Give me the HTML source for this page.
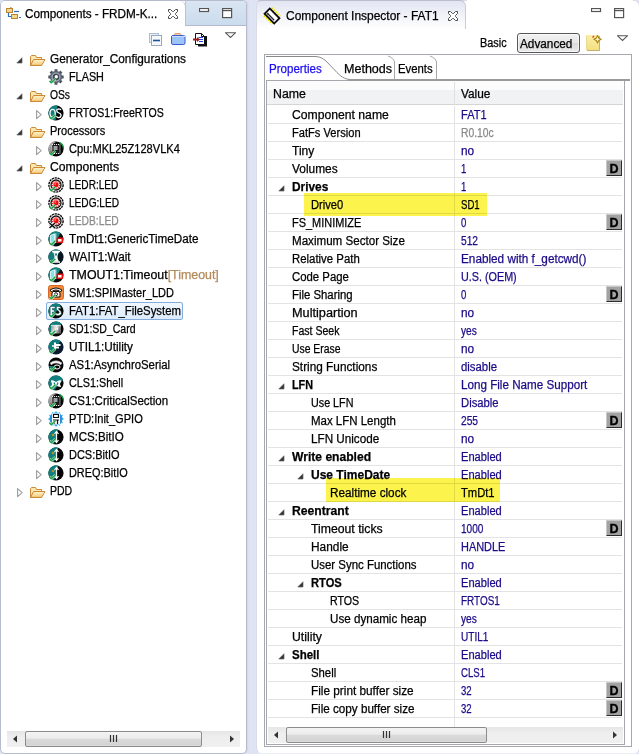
<!DOCTYPE html>
<html><head><meta charset="utf-8"><style>
html,body{margin:0;padding:0;}
body{width:639px;height:754px;overflow:hidden;position:relative;background:#dfe4f4;font-family:"Liberation Sans",sans-serif;font-size:12px;color:#000;}
.ab{position:absolute;display:block;}
.t{position:absolute;transform-origin:0 0;white-space:nowrap;line-height:18px;height:18px;-webkit-text-stroke:0.25px currentColor;}

</style></head><body>

<div class="ab" style="left:0;top:0;width:245px;height:752px;border:1px solid #b6bbce;border-radius:5px;background:#fff;overflow:hidden;box-shadow:1px 0 0 #d5d8e5,2px 0 0 #dcdfec">
<div class="ab" style="left:184px;top:0;width:61px;height:24px;background:linear-gradient(#d9e5f2,#cbdcee);border-bottom:1px solid #b3b8cb;border-left:1px solid #c3c8d8"></div>
<div class="ab" style="left:0;top:0;width:184px;height:25px;background:#fff;border-right:1px solid #bcc1d2;border-top-right-radius:6px"></div>
</div>
<div class="ab" style="left:256px;top:0;width:382px;height:752px;border:1px solid #d9dbe7;border-bottom-color:#eceef5;border-radius:6px;background:#fff;overflow:hidden"></div>
<div class="ab" style="left:467px;top:0;width:166px;height:1px;background:#fff"></div>
<div class="ab" style="left:256px;top:0;width:208px;height:28px;background:linear-gradient(#e2e5f2,#fff);border:1px solid #b9bdcd;border-bottom:none;border-left-color:#d9dbe7;border-right-color:#c8ccda;border-radius:5px 6px 0 0"></div>
<div class="t" id="h1" style="left:25.40px;top:5px;transform:scaleX(0.9778);">Components - FRDM-K...</div>
<svg class="ab" style="left:16px;top:57px" width="7" height="7"><path d="M6 0.8 V6 H0.8 Z" fill="#333" stroke="#666" stroke-width="0.7" stroke-linejoin="round"/></svg>
<svg class="ab" style="left:30px;top:54px" width="16" height="12"><defs><linearGradient id="fg" x1="0" y1="0" x2="0" y2="1"><stop offset="0" stop-color="#fff4cf"/><stop offset="1" stop-color="#f3c977"/></linearGradient></defs><path d="M0.5 2.5 V11.5 H11.5 V3.5 H6.5 L5.5 1.5 H1.5 Z" fill="#fbe6ae" stroke="#c98a3a"/><path d="M0.6 11.4 L3.5 5.5 H15 L11.6 11.4 Z" fill="url(#fg)" stroke="#c98a3a"/></svg>
<div class="t" id="L0" style="left:50.00px;top:50px;transform:scaleX(0.9840);color:#000">Generator_Configurations</div>
<svg class="ab" style="left:48px;top:69px" width="16" height="16"><path d="M13.62 6.58 L15.66 6.51 L15.66 9.49 L13.62 9.42 L12.98 10.97 L14.47 12.36 L12.36 14.47 L10.97 12.98 L9.42 13.62 L9.49 15.66 L6.51 15.66 L6.58 13.62 L5.03 12.98 L3.64 14.47 L1.53 12.36 L3.02 10.97 L2.38 9.42 L0.34 9.49 L0.34 6.51 L2.38 6.58 L3.02 5.03 L1.53 3.64 L3.64 1.53 L5.03 3.02 L6.58 2.38 L6.51 0.34 L9.49 0.34 L9.42 2.38 L10.97 3.02 L12.36 1.53 L14.47 3.64 L12.98 5.03 Z" fill="#4a515c"/><circle cx="8" cy="8" r="6" fill="#5d6672"/><circle cx="8" cy="8" r="4.6" fill="#9aa3b2"/><circle cx="8" cy="8" r="3.2" fill="#3e4654"/><circle cx="8.3" cy="7.7" r="1.7" fill="#fff"/><path d="M1.5 12 L3.3 13.8 L7.3 9.8" fill="none" stroke="#fff" stroke-width="2.6" stroke-linejoin="round" opacity="0.8"/><path d="M1.5 12 L3.3 13.8 L7.3 9.8" fill="none" stroke="#19a040" stroke-width="1.5" stroke-linejoin="round"/></svg>
<div class="t" id="L1" style="left:69.00px;top:68px;transform:scaleX(0.9032);color:#000">FLASH</div>
<svg class="ab" style="left:16px;top:93px" width="7" height="7"><path d="M6 0.8 V6 H0.8 Z" fill="#333" stroke="#666" stroke-width="0.7" stroke-linejoin="round"/></svg>
<svg class="ab" style="left:30px;top:90px" width="16" height="12"><defs><linearGradient id="fg" x1="0" y1="0" x2="0" y2="1"><stop offset="0" stop-color="#fff4cf"/><stop offset="1" stop-color="#f3c977"/></linearGradient></defs><path d="M0.5 2.5 V11.5 H11.5 V3.5 H6.5 L5.5 1.5 H1.5 Z" fill="#fbe6ae" stroke="#c98a3a"/><path d="M0.6 11.4 L3.5 5.5 H15 L11.6 11.4 Z" fill="url(#fg)" stroke="#c98a3a"/></svg>
<div class="t" id="L2" style="left:50.00px;top:86px;transform:scaleX(0.8571);color:#000">OSs</div>
<svg class="ab" style="left:36px;top:110px" width="7" height="10"><path d="M0.6 0.6 L5.2 4.6 L0.6 8.6 Z" fill="#fff" stroke="#9c9c9c" stroke-width="1.1" stroke-linejoin="round"/></svg>
<svg class="ab" style="left:48px;top:105px" width="16" height="16"><circle cx="8" cy="8" r="7.6" fill="#040404"/><path d="M9.47 0.54 L7.50 15.58 A7.6 7.6 0 1 1 9.47 0.54 Z" fill="#11807e"/><ellipse cx="4.6" cy="8.3" rx="2.6" ry="4" fill="none" stroke="#fff" stroke-width="1.3"/><path d="M13 5 Q12.5 3.8 10.8 3.8 Q8.6 3.9 8.8 5.8 Q9 7.4 11 8 Q13.2 8.7 13 10.6 Q12.7 12.6 10.6 12.6 Q9 12.5 8.5 11.2" fill="none" stroke="#fff" stroke-width="1.3"/><path d="M1.5 12 L3.3 13.8 L7.3 9.8" fill="none" stroke="#fff" stroke-width="2.6" stroke-linejoin="round" opacity="0.8"/><path d="M1.5 12 L3.3 13.8 L7.3 9.8" fill="none" stroke="#19a040" stroke-width="1.5" stroke-linejoin="round"/></svg>
<div class="t" id="L3" style="left:69.00px;top:104px;transform:scaleX(0.8785);color:#000">FRTOS1:FreeRTOS</div>
<svg class="ab" style="left:16px;top:129px" width="7" height="7"><path d="M6 0.8 V6 H0.8 Z" fill="#333" stroke="#666" stroke-width="0.7" stroke-linejoin="round"/></svg>
<svg class="ab" style="left:30px;top:126px" width="16" height="12"><defs><linearGradient id="fg" x1="0" y1="0" x2="0" y2="1"><stop offset="0" stop-color="#fff4cf"/><stop offset="1" stop-color="#f3c977"/></linearGradient></defs><path d="M0.5 2.5 V11.5 H11.5 V3.5 H6.5 L5.5 1.5 H1.5 Z" fill="#fbe6ae" stroke="#c98a3a"/><path d="M0.6 11.4 L3.5 5.5 H15 L11.6 11.4 Z" fill="url(#fg)" stroke="#c98a3a"/></svg>
<div class="t" id="L4" style="left:50.00px;top:122px;transform:scaleX(0.9187);color:#000">Processors</div>
<svg class="ab" style="left:36px;top:146px" width="7" height="10"><path d="M0.6 0.6 L5.2 4.6 L0.6 8.6 Z" fill="#fff" stroke="#9c9c9c" stroke-width="1.1" stroke-linejoin="round"/></svg>
<svg class="ab" style="left:48px;top:141px" width="16" height="16"><defs><linearGradient id="cg48141" x1="0" y1="0" x2="1" y2="0.6"><stop offset="0" stop-color="#d8d8d8"/><stop offset="1" stop-color="#505050"/></linearGradient></defs><circle cx="8" cy="8" r="7.6" fill="#050505"/><path d="M9 0.45 A7.6 7.6 0 0 0 1.2 11.5 L5 10 L5 3 Z" fill="url(#cg48141)"/><path d="M11.5 1.3 A7.6 7.6 0 0 1 15.6 8" stroke="#149a3a" stroke-width="1.4" fill="none"/><rect x="4" y="3.5" width="8" height="9" fill="#1a1a1a" stroke="#fff" stroke-width="0.9" stroke-dasharray="1.1 0.9"/><rect x="5.5" y="5" width="4" height="4" fill="#a0a0a0"/><path d="M1.5 12 L3.3 13.8 L7.3 9.8" fill="none" stroke="#fff" stroke-width="2.6" stroke-linejoin="round" opacity="0.8"/><path d="M1.5 12 L3.3 13.8 L7.3 9.8" fill="none" stroke="#19a040" stroke-width="1.5" stroke-linejoin="round"/></svg>
<div class="t" id="L5" style="left:69.00px;top:140px;transform:scaleX(0.9233);color:#000">Cpu:MKL25Z128VLK4</div>
<svg class="ab" style="left:16px;top:165px" width="7" height="7"><path d="M6 0.8 V6 H0.8 Z" fill="#333" stroke="#666" stroke-width="0.7" stroke-linejoin="round"/></svg>
<svg class="ab" style="left:30px;top:162px" width="16" height="12"><defs><linearGradient id="fg" x1="0" y1="0" x2="0" y2="1"><stop offset="0" stop-color="#fff4cf"/><stop offset="1" stop-color="#f3c977"/></linearGradient></defs><path d="M0.5 2.5 V11.5 H11.5 V3.5 H6.5 L5.5 1.5 H1.5 Z" fill="#fbe6ae" stroke="#c98a3a"/><path d="M0.6 11.4 L3.5 5.5 H15 L11.6 11.4 Z" fill="url(#fg)" stroke="#c98a3a"/></svg>
<div class="t" id="L6" style="left:50.00px;top:158px;transform:scaleX(1.0148);color:#000">Components</div>
<svg class="ab" style="left:36px;top:182px" width="7" height="10"><path d="M0.6 0.6 L5.2 4.6 L0.6 8.6 Z" fill="#fff" stroke="#9c9c9c" stroke-width="1.1" stroke-linejoin="round"/></svg>
<svg class="ab" style="left:48px;top:177px" width="16" height="16"><circle cx="8" cy="8" r="7.1" fill="#fff" stroke="#0a0a0a" stroke-width="1.4" stroke-dasharray="2.2 0.7"/><circle cx="8" cy="8" r="5" fill="#fff" stroke="#121212" stroke-width="1.3"/><circle cx="8" cy="8" r="3.6" fill="#fff" stroke="#e81010" stroke-width="1.1" stroke-dasharray="1.1 0.9"/><circle cx="8" cy="7.8" r="2.6" fill="#ee0c0c"/><circle cx="7.3" cy="7" r="0.9" fill="#ff7070"/><path d="M1.5 12 L3.3 13.8 L7.3 9.8" fill="none" stroke="#fff" stroke-width="2.6" stroke-linejoin="round" opacity="0.8"/><path d="M1.5 12 L3.3 13.8 L7.3 9.8" fill="none" stroke="#19a040" stroke-width="1.5" stroke-linejoin="round"/></svg>
<div class="t" id="L7" style="left:69.00px;top:176px;transform:scaleX(0.8414);color:#000">LEDR:LED</div>
<svg class="ab" style="left:36px;top:200px" width="7" height="10"><path d="M0.6 0.6 L5.2 4.6 L0.6 8.6 Z" fill="#fff" stroke="#9c9c9c" stroke-width="1.1" stroke-linejoin="round"/></svg>
<svg class="ab" style="left:48px;top:195px" width="16" height="16"><circle cx="8" cy="8" r="7.1" fill="#fff" stroke="#0a0a0a" stroke-width="1.4" stroke-dasharray="2.2 0.7"/><circle cx="8" cy="8" r="5" fill="#fff" stroke="#121212" stroke-width="1.3"/><circle cx="8" cy="8" r="3.6" fill="#fff" stroke="#e81010" stroke-width="1.1" stroke-dasharray="1.1 0.9"/><circle cx="8" cy="7.8" r="2.6" fill="#ee0c0c"/><circle cx="7.3" cy="7" r="0.9" fill="#ff7070"/><path d="M1.5 12 L3.3 13.8 L7.3 9.8" fill="none" stroke="#fff" stroke-width="2.6" stroke-linejoin="round" opacity="0.8"/><path d="M1.5 12 L3.3 13.8 L7.3 9.8" fill="none" stroke="#19a040" stroke-width="1.5" stroke-linejoin="round"/></svg>
<div class="t" id="L8" style="left:69.00px;top:194px;transform:scaleX(0.8423);color:#000">LEDG:LED</div>
<svg class="ab" style="left:36px;top:218px" width="7" height="10"><path d="M0.6 0.6 L5.2 4.6 L0.6 8.6 Z" fill="#fff" stroke="#9c9c9c" stroke-width="1.1" stroke-linejoin="round"/></svg>
<svg class="ab" style="left:48px;top:213px" width="16" height="16"><circle cx="8" cy="8" r="7.1" fill="#fff" stroke="#0a0a0a" stroke-width="1.4" stroke-dasharray="2.2 0.7"/><circle cx="8" cy="8" r="5" fill="#fff" stroke="#121212" stroke-width="1.3"/><circle cx="8" cy="8" r="3.6" fill="#fff" stroke="#e81010" stroke-width="1.1" stroke-dasharray="1.1 0.9"/><circle cx="8" cy="7.8" r="2.6" fill="#ee0c0c"/><circle cx="7.3" cy="7" r="0.9" fill="#ff7070"/><path d="M1.5 10 L7 15 M7 10 L1.5 15" stroke="#fff" stroke-width="3"/><path d="M1.5 10 L7 15 M7 10 L1.5 15" stroke="#111" stroke-width="1.5"/></svg>
<div class="t" id="L9" style="left:69.00px;top:212px;transform:scaleX(0.8562);color:#8c8c8c">LEDB:LED</div>
<svg class="ab" style="left:36px;top:236px" width="7" height="10"><path d="M0.6 0.6 L5.2 4.6 L0.6 8.6 Z" fill="#fff" stroke="#9c9c9c" stroke-width="1.1" stroke-linejoin="round"/></svg>
<svg class="ab" style="left:48px;top:231px" width="16" height="16"><circle cx="8" cy="8" r="7.6" fill="#0a0a0a"/><path d="M12.51 1.88 L5.51 15.18 A7.6 7.6 0 1 1 12.51 1.88 Z" fill="#138a86"/><path d="M2.5 4.5 L6.5 2.8 V11 L2.5 12.8 Z" fill="#80e4f0" stroke="#fff" stroke-width="0.8"/><path d="M7.8 2.5 V12" stroke="#fff" stroke-width="0.9"/><rect x="9.3" y="7.3" width="5" height="4" fill="#fff" stroke="#e00e0e" stroke-width="1.5"/><path d="M1.5 12 L3.3 13.8 L7.3 9.8" fill="none" stroke="#fff" stroke-width="2.6" stroke-linejoin="round" opacity="0.8"/><path d="M1.5 12 L3.3 13.8 L7.3 9.8" fill="none" stroke="#19a040" stroke-width="1.5" stroke-linejoin="round"/></svg>
<div class="t" id="L10" style="left:69.00px;top:230px;transform:scaleX(0.9745);color:#000">TmDt1:GenericTimeDate</div>
<svg class="ab" style="left:36px;top:254px" width="7" height="10"><path d="M0.6 0.6 L5.2 4.6 L0.6 8.6 Z" fill="#fff" stroke="#9c9c9c" stroke-width="1.1" stroke-linejoin="round"/></svg>
<svg class="ab" style="left:48px;top:249px" width="16" height="16"><circle cx="8" cy="8" r="7.6" fill="#06161e"/><path d="M12.18 1.65 L3.82 14.35 A7.6 7.6 0 0 1 12.18 1.65 Z" fill="#157a7e"/><path d="M4 2.5 H12 M4 13 H12" stroke="#fff" stroke-width="1.4"/><path d="M5 3 Q8 8 5 12.5 H11 Q8 8 11 3 Z" fill="#fff"/><path d="M6.5 4.5 H9.5 L8 7.5 Z" fill="#157a7e"/><path d="M1.5 12 L3.3 13.8 L7.3 9.8" fill="none" stroke="#fff" stroke-width="2.6" stroke-linejoin="round" opacity="0.8"/><path d="M1.5 12 L3.3 13.8 L7.3 9.8" fill="none" stroke="#19a040" stroke-width="1.5" stroke-linejoin="round"/></svg>
<div class="t" id="L11" style="left:69.00px;top:248px;transform:scaleX(0.9752);color:#000">WAIT1:Wait</div>
<svg class="ab" style="left:36px;top:272px" width="7" height="10"><path d="M0.6 0.6 L5.2 4.6 L0.6 8.6 Z" fill="#fff" stroke="#9c9c9c" stroke-width="1.1" stroke-linejoin="round"/></svg>
<svg class="ab" style="left:48px;top:267px" width="16" height="16"><circle cx="8" cy="8" r="7.6" fill="#0a0a0a"/><path d="M12.51 1.88 L5.51 15.18 A7.6 7.6 0 1 1 12.51 1.88 Z" fill="#138a86"/><path d="M2.5 4.5 L6.5 2.8 V11 L2.5 12.8 Z" fill="#80e4f0" stroke="#fff" stroke-width="0.8"/><path d="M7.8 2.5 V12" stroke="#fff" stroke-width="0.9"/><rect x="9.3" y="7.3" width="5" height="4" fill="#fff" stroke="#e00e0e" stroke-width="1.5"/><path d="M1.5 12 L3.3 13.8 L7.3 9.8" fill="none" stroke="#fff" stroke-width="2.6" stroke-linejoin="round" opacity="0.8"/><path d="M1.5 12 L3.3 13.8 L7.3 9.8" fill="none" stroke="#19a040" stroke-width="1.5" stroke-linejoin="round"/></svg>
<div class="t" id="L12" style="left:69.00px;top:266px;transform:scaleX(1.0320);color:#000">TMOUT1:Timeout<span style="color:#b48a5a">[Timeout]</span></div>
<svg class="ab" style="left:36px;top:290px" width="7" height="10"><path d="M0.6 0.6 L5.2 4.6 L0.6 8.6 Z" fill="#fff" stroke="#9c9c9c" stroke-width="1.1" stroke-linejoin="round"/></svg>
<svg class="ab" style="left:48px;top:285px" width="16" height="16"><rect x="0.5" y="0.5" width="15" height="14" rx="2" fill="#f48a3c" stroke="#d8662a"/><path d="M2 5 Q8 1 14 5 L12.5 7 L11 5.5 Q8 4.5 5 5.5 L3.5 7 Z" fill="#fff" stroke="#111" stroke-width="1"/><path d="M4 8 L5 6.5 H11 L12 8 V12 H4 Z" fill="#fff" stroke="#111" stroke-width="1"/><circle cx="8" cy="9.2" r="1.5" fill="none" stroke="#111" stroke-width="0.9"/><path d="M1.5 12 L3.3 13.8 L7.3 9.8" fill="none" stroke="#fff" stroke-width="2.6" stroke-linejoin="round" opacity="0.8"/><path d="M1.5 12 L3.3 13.8 L7.3 9.8" fill="none" stroke="#19a040" stroke-width="1.5" stroke-linejoin="round"/></svg>
<div class="t" id="L13" style="left:69.00px;top:284px;transform:scaleX(0.9142);color:#000">SM1:SPIMaster_LDD</div>
<svg class="ab" style="left:36px;top:308px" width="7" height="10"><path d="M0.6 0.6 L5.2 4.6 L0.6 8.6 Z" fill="#fff" stroke="#9c9c9c" stroke-width="1.1" stroke-linejoin="round"/></svg>
<div class="ab" style="left:46px;top:302px;width:135px;height:16px;border:1px solid #84acdd;border-radius:2px;background:linear-gradient(#f1f7fe,#dcebfc)"></div>
<svg class="ab" style="left:48px;top:303px" width="16" height="16"><circle cx="8" cy="8" r="7.6" fill="#050505"/><path d="M12.71 2.03 L4.46 14.73 A7.6 7.6 0 1 1 12.71 2.03 Z" fill="#0f7f7d"/><path d="M2.2 3.5 H7 V5.5 H4.4 V7 H6.5 V9 H4.4 V12.5 H2.2 Z" fill="#fff" stroke="#0a4a4a" stroke-width="0.5"/><path d="M12.8 4 Q11 3 9.3 3.6 Q7.6 4.5 8.6 6.6 Q9.5 7.7 11 8.6 Q11.8 9.4 10.8 10.2 Q9.6 10.7 8 10 L7.6 12 Q10 13.4 12.4 12 Q14 10.6 13 8.4 Q12 7.2 10.6 6.3 Q10 5.7 10.8 5.3 Q11.8 5 12.6 5.8 Z" fill="#fff" stroke="#0a4a4a" stroke-width="0.5"/><path d="M1.5 12 L3.3 13.8 L7.3 9.8" fill="none" stroke="#fff" stroke-width="2.6" stroke-linejoin="round" opacity="0.8"/><path d="M1.5 12 L3.3 13.8 L7.3 9.8" fill="none" stroke="#19a040" stroke-width="1.5" stroke-linejoin="round"/></svg>
<div class="t" id="L14" style="left:69.00px;top:302px;transform:scaleX(0.9471);color:#000">FAT1:FAT_FileSystem</div>
<svg class="ab" style="left:36px;top:326px" width="7" height="10"><path d="M0.6 0.6 L5.2 4.6 L0.6 8.6 Z" fill="#fff" stroke="#9c9c9c" stroke-width="1.1" stroke-linejoin="round"/></svg>
<svg class="ab" style="left:48px;top:321px" width="16" height="16"><circle cx="8" cy="8" r="7.6" fill="#050505"/><path d="M13.37 2.63 L2.63 13.37 A7.6 7.6 0 0 1 13.37 2.63 Z" fill="#0f7f7d"/><defs><linearGradient id="sdg" x1="0" y1="0" x2="1" y2="0.3"><stop offset="0" stop-color="#888"/><stop offset="0.55" stop-color="#eee"/><stop offset="1" stop-color="#666"/></linearGradient></defs><rect x="3" y="4" width="10" height="8.5" fill="url(#sdg)"/><path d="M3.5 4.5 H12.5" stroke="#fff" stroke-width="1.4" stroke-dasharray="1 1"/><path d="M8 8 L10 6 V9 Z" fill="#fff"/><path d="M1.5 12 L3.3 13.8 L7.3 9.8" fill="none" stroke="#fff" stroke-width="2.6" stroke-linejoin="round" opacity="0.8"/><path d="M1.5 12 L3.3 13.8 L7.3 9.8" fill="none" stroke="#19a040" stroke-width="1.5" stroke-linejoin="round"/></svg>
<div class="t" id="L15" style="left:69.00px;top:320px;transform:scaleX(0.8749);color:#000">SD1:SD_Card</div>
<svg class="ab" style="left:36px;top:344px" width="7" height="10"><path d="M0.6 0.6 L5.2 4.6 L0.6 8.6 Z" fill="#fff" stroke="#9c9c9c" stroke-width="1.1" stroke-linejoin="round"/></svg>
<svg class="ab" style="left:48px;top:339px" width="16" height="16"><circle cx="8" cy="8" r="7.6" fill="#0a1a30"/><path d="M12.71 2.03 L3.82 14.35 A7.6 7.6 0 1 1 12.71 2.03 Z" fill="#0f7f7d"/><path d="M7 3.5 V11 M7 6 H12.5 M7 8.5 H11" stroke="#fff" stroke-width="2"/><path d="M4 7 L7 7" stroke="#fff" stroke-width="1.5"/><path d="M1.5 12 L3.3 13.8 L7.3 9.8" fill="none" stroke="#fff" stroke-width="2.6" stroke-linejoin="round" opacity="0.8"/><path d="M1.5 12 L3.3 13.8 L7.3 9.8" fill="none" stroke="#19a040" stroke-width="1.5" stroke-linejoin="round"/></svg>
<div class="t" id="L16" style="left:69.00px;top:338px;transform:scaleX(0.9786);color:#000">UTIL1:Utility</div>
<svg class="ab" style="left:36px;top:362px" width="7" height="10"><path d="M0.6 0.6 L5.2 4.6 L0.6 8.6 Z" fill="#fff" stroke="#9c9c9c" stroke-width="1.1" stroke-linejoin="round"/></svg>
<svg class="ab" style="left:48px;top:357px" width="16" height="16"><circle cx="8" cy="8" r="7.5" fill="#060606"/><path d="M1 9 A7.5 7.5 0 0 0 4 14 L5 9 Z" fill="#0f7f7d"/><path d="M2 6 Q8 1.5 14 6 L12.5 8 L11 6.5 Q8 5.5 5 6.5 L3.5 8 Z" fill="#fff" stroke="#aaa" stroke-width="0.6"/><ellipse cx="9" cy="10" rx="3" ry="2" fill="none" stroke="#fff" stroke-width="1"/><path d="M1.5 12 L3.3 13.8 L7.3 9.8" fill="none" stroke="#fff" stroke-width="2.6" stroke-linejoin="round" opacity="0.8"/><path d="M1.5 12 L3.3 13.8 L7.3 9.8" fill="none" stroke="#19a040" stroke-width="1.5" stroke-linejoin="round"/></svg>
<div class="t" id="L17" style="left:69.00px;top:356px;transform:scaleX(0.9472);color:#000">AS1:AsynchroSerial</div>
<svg class="ab" style="left:36px;top:380px" width="7" height="10"><path d="M0.6 0.6 L5.2 4.6 L0.6 8.6 Z" fill="#fff" stroke="#9c9c9c" stroke-width="1.1" stroke-linejoin="round"/></svg>
<svg class="ab" style="left:48px;top:375px" width="16" height="16"><circle cx="8" cy="8" r="7.6" fill="#050505"/><path d="M14.99 5.01 L6.04 15.34 A7.6 7.6 0 1 1 14.99 5.01 Z" fill="#11807e"/><path d="M2.8 5.5 Q5 4.5 8 7 Q11 4.5 13.2 5.5 L12 9 L13 12 Q10.5 12.5 8 10 Q5.5 12.5 3 12 L4 9 Z" fill="#fff"/><path d="M6 7.5 L7 10 M10 7.5 L9 10" stroke="#11807e" stroke-width="1.3"/><path d="M1.5 12 L3.3 13.8 L7.3 9.8" fill="none" stroke="#fff" stroke-width="2.6" stroke-linejoin="round" opacity="0.8"/><path d="M1.5 12 L3.3 13.8 L7.3 9.8" fill="none" stroke="#19a040" stroke-width="1.5" stroke-linejoin="round"/></svg>
<div class="t" id="L18" style="left:69.00px;top:374px;transform:scaleX(0.9002);color:#000">CLS1:Shell</div>
<svg class="ab" style="left:36px;top:398px" width="7" height="10"><path d="M0.6 0.6 L5.2 4.6 L0.6 8.6 Z" fill="#fff" stroke="#9c9c9c" stroke-width="1.1" stroke-linejoin="round"/></svg>
<svg class="ab" style="left:48px;top:393px" width="16" height="16"><defs><linearGradient id="cg48393" x1="0" y1="0" x2="1" y2="0.6"><stop offset="0" stop-color="#d8d8d8"/><stop offset="1" stop-color="#505050"/></linearGradient></defs><circle cx="8" cy="8" r="7.6" fill="#050505"/><path d="M9 0.45 A7.6 7.6 0 0 0 1.2 11.5 L5 10 L5 3 Z" fill="url(#cg48393)"/><path d="M11.5 1.3 A7.6 7.6 0 0 1 15.6 8" stroke="#149a3a" stroke-width="1.4" fill="none"/><rect x="4" y="3.5" width="8" height="9" fill="#1a1a1a" stroke="#fff" stroke-width="0.9" stroke-dasharray="1.1 0.9"/><rect x="5.5" y="5" width="4" height="4" fill="#a0a0a0"/><path d="M1.5 12 L3.3 13.8 L7.3 9.8" fill="none" stroke="#fff" stroke-width="2.6" stroke-linejoin="round" opacity="0.8"/><path d="M1.5 12 L3.3 13.8 L7.3 9.8" fill="none" stroke="#19a040" stroke-width="1.5" stroke-linejoin="round"/></svg>
<div class="t" id="L19" style="left:69.00px;top:392px;transform:scaleX(0.9593);color:#000">CS1:CriticalSection</div>
<svg class="ab" style="left:36px;top:416px" width="7" height="10"><path d="M0.6 0.6 L5.2 4.6 L0.6 8.6 Z" fill="#fff" stroke="#9c9c9c" stroke-width="1.1" stroke-linejoin="round"/></svg>
<svg class="ab" style="left:48px;top:411px" width="16" height="16"><path d="M14.36 7.25 L15.57 7.30 L15.57 8.70 L14.36 8.75 L13.88 10.53 L14.90 11.18 L14.21 12.39 L13.13 11.83 L11.83 13.13 L12.39 14.21 L11.18 14.90 L10.53 13.88 L8.75 14.36 L8.70 15.57 L7.30 15.57 L7.25 14.36 L5.47 13.88 L4.82 14.90 L3.61 14.21 L4.17 13.13 L2.87 11.83 L1.79 12.39 L1.10 11.18 L2.12 10.53 L1.64 8.75 L0.43 8.70 L0.43 7.30 L1.64 7.25 L2.12 5.47 L1.10 4.82 L1.79 3.61 L2.87 4.17 L4.17 2.87 L3.61 1.79 L4.82 1.10 L5.47 2.12 L7.25 1.64 L7.30 0.43 L8.70 0.43 L8.75 1.64 L10.53 2.12 L11.18 1.10 L12.39 1.79 L11.83 2.87 L13.13 4.17 L14.21 3.61 L14.90 4.82 L13.88 5.47 Z" fill="#3bb0f0"/><circle cx="8" cy="8" r="6.4" fill="#2a8ee0"/><rect x="4" y="2.5" width="8" height="11" fill="#fff"/><path d="M5.5 3.5 V6.5 H10.5 V3.5 Z M6.5 9 V13 M9.5 9 V13 M5 9 H11" fill="none" stroke="#111" stroke-width="1.2"/><path d="M1.5 12 L3.3 13.8 L7.3 9.8" fill="none" stroke="#fff" stroke-width="2.6" stroke-linejoin="round" opacity="0.8"/><path d="M1.5 12 L3.3 13.8 L7.3 9.8" fill="none" stroke="#19a040" stroke-width="1.5" stroke-linejoin="round"/></svg>
<div class="t" id="L20" style="left:69.00px;top:410px;transform:scaleX(0.9216);color:#000">PTD:Init_GPIO</div>
<svg class="ab" style="left:36px;top:434px" width="7" height="10"><path d="M0.6 0.6 L5.2 4.6 L0.6 8.6 Z" fill="#fff" stroke="#9c9c9c" stroke-width="1.1" stroke-linejoin="round"/></svg>
<svg class="ab" style="left:48px;top:429px" width="16" height="16"><circle cx="8" cy="8" r="7.6" fill="#050505"/><path d="M10.37 0.78 L6.07 15.35 A7.6 7.6 0 1 1 10.37 0.78 Z" fill="#0f7f7d"/><circle cx="5" cy="6" r="1.3" fill="#b89028"/><path d="M8.5 3 V13" stroke="#fff" stroke-width="1.3"/><path d="M6.5 5 L8.5 2.5 L10.5 5 M6.5 11 L8.5 13.5 L10.5 11" fill="none" stroke="#fff" stroke-width="1.2"/><path d="M1.5 12 L3.3 13.8 L7.3 9.8" fill="none" stroke="#fff" stroke-width="2.6" stroke-linejoin="round" opacity="0.8"/><path d="M1.5 12 L3.3 13.8 L7.3 9.8" fill="none" stroke="#19a040" stroke-width="1.5" stroke-linejoin="round"/></svg>
<div class="t" id="L21" style="left:69.00px;top:428px;transform:scaleX(0.9640);color:#000">MCS:BitIO</div>
<svg class="ab" style="left:36px;top:452px" width="7" height="10"><path d="M0.6 0.6 L5.2 4.6 L0.6 8.6 Z" fill="#fff" stroke="#9c9c9c" stroke-width="1.1" stroke-linejoin="round"/></svg>
<svg class="ab" style="left:48px;top:447px" width="16" height="16"><circle cx="8" cy="8" r="7.6" fill="#050505"/><path d="M10.37 0.78 L6.07 15.35 A7.6 7.6 0 1 1 10.37 0.78 Z" fill="#0f7f7d"/><circle cx="5" cy="6" r="1.3" fill="#b89028"/><path d="M8.5 3 V13" stroke="#fff" stroke-width="1.3"/><path d="M6.5 5 L8.5 2.5 L10.5 5 M6.5 11 L8.5 13.5 L10.5 11" fill="none" stroke="#fff" stroke-width="1.2"/><path d="M1.5 12 L3.3 13.8 L7.3 9.8" fill="none" stroke="#fff" stroke-width="2.6" stroke-linejoin="round" opacity="0.8"/><path d="M1.5 12 L3.3 13.8 L7.3 9.8" fill="none" stroke="#19a040" stroke-width="1.5" stroke-linejoin="round"/></svg>
<div class="t" id="L22" style="left:69.00px;top:446px;transform:scaleX(0.9150);color:#000">DCS:BitIO</div>
<svg class="ab" style="left:36px;top:470px" width="7" height="10"><path d="M0.6 0.6 L5.2 4.6 L0.6 8.6 Z" fill="#fff" stroke="#9c9c9c" stroke-width="1.1" stroke-linejoin="round"/></svg>
<svg class="ab" style="left:48px;top:465px" width="16" height="16"><circle cx="8" cy="8" r="7.6" fill="#050505"/><path d="M10.37 0.78 L6.07 15.35 A7.6 7.6 0 1 1 10.37 0.78 Z" fill="#0f7f7d"/><circle cx="5" cy="6" r="1.3" fill="#b89028"/><path d="M8.5 3 V13" stroke="#fff" stroke-width="1.3"/><path d="M6.5 5 L8.5 2.5 L10.5 5 M6.5 11 L8.5 13.5 L10.5 11" fill="none" stroke="#fff" stroke-width="1.2"/><path d="M1.5 12 L3.3 13.8 L7.3 9.8" fill="none" stroke="#fff" stroke-width="2.6" stroke-linejoin="round" opacity="0.8"/><path d="M1.5 12 L3.3 13.8 L7.3 9.8" fill="none" stroke="#19a040" stroke-width="1.5" stroke-linejoin="round"/></svg>
<div class="t" id="L23" style="left:69.00px;top:464px;transform:scaleX(0.9085);color:#000">DREQ:BitIO</div>
<svg class="ab" style="left:17px;top:488px" width="7" height="10"><path d="M0.6 0.6 L5.2 4.6 L0.6 8.6 Z" fill="#fff" stroke="#9c9c9c" stroke-width="1.1" stroke-linejoin="round"/></svg>
<svg class="ab" style="left:30px;top:486px" width="16" height="12"><defs><linearGradient id="fg" x1="0" y1="0" x2="0" y2="1"><stop offset="0" stop-color="#fff4cf"/><stop offset="1" stop-color="#f3c977"/></linearGradient></defs><path d="M0.5 2.5 V11.5 H11.5 V3.5 H6.5 L5.5 1.5 H1.5 Z" fill="#fbe6ae" stroke="#c98a3a"/><path d="M0.6 11.4 L3.5 5.5 H15 L11.6 11.4 Z" fill="url(#fg)" stroke="#c98a3a"/></svg>
<div class="t" id="L24" style="left:50.00px;top:482px;transform:scaleX(0.8752);color:#000">PDD</div>
<div class="t" id="h2" style="left:286.20px;top:7px;transform:scaleX(0.9961);">Component Inspector - FAT1</div>
<div class="t" id="basic" style="left:480.28px;top:34px;transform:scaleX(0.9074);">Basic</div>
<div class="ab" style="left:517px;top:33px;width:61px;height:18px;border:1px solid #585858;border-radius:3px;background:linear-gradient(#f2f2f2,#e6e6e6 50%,#d9d9d9 51%,#ebebeb);box-shadow:inset 0 0 0 1px rgba(255,255,255,0.6)"></div>
<div class="t" id="adv" style="left:520.40px;top:35px;transform:scaleX(0.9811);">Advanced</div>
<div class="ab" style="left:264px;top:54px;width:366px;height:691px;border:1px solid #a6a8ae;background:#fff"></div>
<div class="ab" style="left:348px;top:79px;width:282px;height:2px;background:#9a9a9a"></div>
<svg class="ab" style="left:264px;top:54px" width="368" height="28"><path d="M2 2.5 H51 C56 2.5 59 4.5 62 7 L73 18.5 C76 21.5 80 25.5 87 25.5" fill="#fff" stroke="#8a8a8a" stroke-width="1"/><path d="M124 2 C127 3 130 5 130.5 8 V26" fill="none" stroke="#a8a8a8"/><path d="M166 2 C169 3 172 5 172.5 8 V26" fill="none" stroke="#a8a8a8"/></svg>
<div class="t" id="props" style="left:269.24px;top:60px;transform:scaleX(0.9630);color:#1f10f0">Properties</div>
<div class="t" id="methods" style="left:343.77px;top:60px;transform:scaleX(1.0447);">Methods</div>
<div class="t" id="events" style="left:398.03px;top:60px;transform:scaleX(0.9451);">Events</div>
<div class="ab" style="left:266px;top:80px;width:357px;height:663px;border:1px solid #a6a8ae;background:#fff"></div>
<div class="ab" style="left:348px;top:79px;width:282px;height:2px;background:#9a9a9a"></div>
<div class="ab" style="left:267px;top:81px;width:356px;height:23px;background:linear-gradient(#fcfcfc 0,#fcfcfc 9px,#f1f2f4 9px,#f1f2f4 100%);border-bottom:1px solid #d5d5d5"></div>
<div class="ab" style="left:454px;top:82px;width:1px;height:22px;background:#e0e0e0"></div>
<div class="t" id="name" style="left:273.37px;top:85px;transform:scaleX(1.0264);">Name</div>
<div class="t" id="value" style="left:460.60px;top:85px;transform:scaleX(0.9869);">Value</div>
<div class="ab" style="left:268px;top:123px;width:354px;height:1px;background:#e3e3e3"></div>
<div class="ab" style="left:454px;top:106px;width:1px;height:17px;background:#e3e3e3"></div>
<div class="t" id="N0" style="left:292.00px;top:106px;transform:scaleX(1.0148);">Component name</div>
<div class="t" id="V0" style="left:460.50px;top:106px;transform:scaleX(0.9188);color:#1c0c88">FAT1</div>
<div class="ab" style="left:268px;top:141px;width:354px;height:1px;background:#e3e3e3"></div>
<div class="ab" style="left:454px;top:124px;width:1px;height:17px;background:#e3e3e3"></div>
<div class="t" id="N1" style="left:292.00px;top:124px;transform:scaleX(0.9261);">FatFs Version</div>
<div class="t" id="V1" style="left:460.50px;top:124px;transform:scaleX(0.8598);color:#8a8a8a">R0.10c</div>
<div class="ab" style="left:268px;top:159px;width:354px;height:1px;background:#e3e3e3"></div>
<div class="ab" style="left:454px;top:142px;width:1px;height:17px;background:#e3e3e3"></div>
<div class="t" id="N2" style="left:292.00px;top:142px;transform:scaleX(1.0004);">Tiny</div>
<div class="t" id="V2" style="left:460.50px;top:142px;transform:scaleX(0.9862);color:#1c0c88">no</div>
<div class="ab" style="left:268px;top:177px;width:354px;height:1px;background:#e3e3e3"></div>
<div class="ab" style="left:454px;top:160px;width:1px;height:17px;background:#e3e3e3"></div>
<div class="t" id="N3" style="left:292.00px;top:160px;transform:scaleX(0.9915);">Volumes</div>
<div class="t" id="V3" style="left:460.50px;top:160px;transform:scaleX(0.8000);color:#1c0c88">1</div>
<div class="ab" style="left:606px;top:160px;width:14px;height:14px;background:#a2a2a2;border-top:1px solid #c8c8c8;border-left:1px solid #c8c8c8;border-right:1px solid #2c2c2c;border-bottom:1px solid #2c2c2c;font-weight:bold;font-size:12.5px;line-height:16px;text-align:center;-webkit-text-stroke:0.3px #000">D</div>
<div class="ab" style="left:268px;top:195px;width:354px;height:1px;background:#e3e3e3"></div>
<div class="ab" style="left:454px;top:178px;width:1px;height:17px;background:#e3e3e3"></div>
<svg class="ab" style="left:278px;top:185px" width="7" height="7"><path d="M6 0.8 V6 H0.8 Z" fill="#333" stroke="#666" stroke-width="0.7" stroke-linejoin="round"/></svg>
<div class="t" id="N4" style="left:292.00px;top:178px;transform:scaleX(0.9898);font-weight:bold;">Drives</div>
<div class="t" id="V4" style="left:460.50px;top:178px;transform:scaleX(0.8000);color:#1c0c88">1</div>
<div class="ab" style="left:268px;top:213px;width:354px;height:1px;background:#e3e3e3"></div>
<div class="ab" style="left:454px;top:196px;width:1px;height:17px;background:#e3e3e3"></div>
<div class="t" id="N5" style="left:311.00px;top:196px;transform:scaleX(0.9295);">Drive0</div>
<div class="t" id="V5" style="left:460.50px;top:196px;transform:scaleX(0.8000);color:#000">SD1</div>
<div class="ab" style="left:268px;top:231px;width:354px;height:1px;background:#e3e3e3"></div>
<div class="ab" style="left:454px;top:214px;width:1px;height:17px;background:#e3e3e3"></div>
<div class="t" id="N6" style="left:292.00px;top:214px;transform:scaleX(0.9121);">FS_MINIMIZE</div>
<div class="t" id="V6" style="left:460.50px;top:214px;transform:scaleX(0.8000);color:#1c0c88">0</div>
<div class="ab" style="left:606px;top:214px;width:14px;height:14px;background:#a2a2a2;border-top:1px solid #c8c8c8;border-left:1px solid #c8c8c8;border-right:1px solid #2c2c2c;border-bottom:1px solid #2c2c2c;font-weight:bold;font-size:12.5px;line-height:16px;text-align:center;-webkit-text-stroke:0.3px #000">D</div>
<div class="ab" style="left:268px;top:249px;width:354px;height:1px;background:#e3e3e3"></div>
<div class="ab" style="left:454px;top:232px;width:1px;height:17px;background:#e3e3e3"></div>
<div class="t" id="N7" style="left:292.00px;top:232px;transform:scaleX(0.9671);">Maximum Sector Size</div>
<div class="t" id="V7" style="left:460.50px;top:232px;transform:scaleX(0.8508);color:#1c0c88">512</div>
<div class="ab" style="left:268px;top:267px;width:354px;height:1px;background:#e3e3e3"></div>
<div class="ab" style="left:454px;top:250px;width:1px;height:17px;background:#e3e3e3"></div>
<div class="t" id="N8" style="left:292.00px;top:250px;transform:scaleX(0.9487);">Relative Path</div>
<div class="t" id="V8" style="left:460.50px;top:250px;transform:scaleX(0.9794);color:#1c0c88">Enabled with f_getcwd()</div>
<div class="ab" style="left:268px;top:285px;width:354px;height:1px;background:#e3e3e3"></div>
<div class="ab" style="left:454px;top:268px;width:1px;height:17px;background:#e3e3e3"></div>
<div class="t" id="N9" style="left:292.00px;top:268px;transform:scaleX(0.9469);">Code Page</div>
<div class="t" id="V9" style="left:460.50px;top:268px;transform:scaleX(0.8986);color:#1c0c88">U.S. (OEM)</div>
<div class="ab" style="left:268px;top:303px;width:354px;height:1px;background:#e3e3e3"></div>
<div class="ab" style="left:454px;top:286px;width:1px;height:17px;background:#e3e3e3"></div>
<div class="t" id="N10" style="left:292.00px;top:286px;transform:scaleX(0.9461);">File Sharing</div>
<div class="t" id="V10" style="left:460.50px;top:286px;transform:scaleX(0.8000);color:#1c0c88">0</div>
<div class="ab" style="left:606px;top:286px;width:14px;height:14px;background:#a2a2a2;border-top:1px solid #c8c8c8;border-left:1px solid #c8c8c8;border-right:1px solid #2c2c2c;border-bottom:1px solid #2c2c2c;font-weight:bold;font-size:12.5px;line-height:16px;text-align:center;-webkit-text-stroke:0.3px #000">D</div>
<div class="ab" style="left:268px;top:321px;width:354px;height:1px;background:#e3e3e3"></div>
<div class="ab" style="left:454px;top:304px;width:1px;height:17px;background:#e3e3e3"></div>
<div class="t" id="N11" style="left:292.00px;top:304px;transform:scaleX(1.0588);">Multipartion</div>
<div class="t" id="V11" style="left:460.50px;top:304px;transform:scaleX(0.9862);color:#1c0c88">no</div>
<div class="ab" style="left:268px;top:339px;width:354px;height:1px;background:#e3e3e3"></div>
<div class="ab" style="left:454px;top:322px;width:1px;height:17px;background:#e3e3e3"></div>
<div class="t" id="N12" style="left:292.00px;top:322px;transform:scaleX(0.8794);">Fast Seek</div>
<div class="t" id="V12" style="left:460.50px;top:322px;transform:scaleX(0.8471);color:#1c0c88">yes</div>
<div class="ab" style="left:268px;top:357px;width:354px;height:1px;background:#e3e3e3"></div>
<div class="ab" style="left:454px;top:340px;width:1px;height:17px;background:#e3e3e3"></div>
<div class="t" id="N13" style="left:292.00px;top:340px;transform:scaleX(0.8657);">Use Erase</div>
<div class="t" id="V13" style="left:460.50px;top:340px;transform:scaleX(0.9862);color:#1c0c88">no</div>
<div class="ab" style="left:268px;top:375px;width:354px;height:1px;background:#e3e3e3"></div>
<div class="ab" style="left:454px;top:358px;width:1px;height:17px;background:#e3e3e3"></div>
<div class="t" id="N14" style="left:292.00px;top:358px;transform:scaleX(0.9837);">String Functions</div>
<div class="t" id="V14" style="left:460.50px;top:358px;transform:scaleX(0.9476);color:#1c0c88">disable</div>
<div class="ab" style="left:268px;top:393px;width:354px;height:1px;background:#e3e3e3"></div>
<div class="ab" style="left:454px;top:376px;width:1px;height:17px;background:#e3e3e3"></div>
<svg class="ab" style="left:278px;top:383px" width="7" height="7"><path d="M6 0.8 V6 H0.8 Z" fill="#333" stroke="#666" stroke-width="0.7" stroke-linejoin="round"/></svg>
<div class="t" id="N15" style="left:292.00px;top:376px;transform:scaleX(0.9006);font-weight:bold;">LFN</div>
<div class="t" id="V15" style="left:460.50px;top:376px;transform:scaleX(0.9706);color:#1c0c88">Long File Name Support</div>
<div class="ab" style="left:268px;top:411px;width:354px;height:1px;background:#e3e3e3"></div>
<div class="ab" style="left:454px;top:394px;width:1px;height:17px;background:#e3e3e3"></div>
<div class="t" id="N16" style="left:311.00px;top:394px;transform:scaleX(0.8961);">Use LFN</div>
<div class="t" id="V16" style="left:460.50px;top:394px;transform:scaleX(0.9386);color:#1c0c88">Disable</div>
<div class="ab" style="left:268px;top:429px;width:354px;height:1px;background:#e3e3e3"></div>
<div class="ab" style="left:454px;top:412px;width:1px;height:17px;background:#e3e3e3"></div>
<div class="t" id="N17" style="left:311.00px;top:412px;transform:scaleX(0.9564);">Max LFN Length</div>
<div class="t" id="V17" style="left:460.50px;top:412px;transform:scaleX(0.8508);color:#1c0c88">255</div>
<div class="ab" style="left:606px;top:412px;width:14px;height:14px;background:#a2a2a2;border-top:1px solid #c8c8c8;border-left:1px solid #c8c8c8;border-right:1px solid #2c2c2c;border-bottom:1px solid #2c2c2c;font-weight:bold;font-size:12.5px;line-height:16px;text-align:center;-webkit-text-stroke:0.3px #000">D</div>
<div class="ab" style="left:268px;top:447px;width:354px;height:1px;background:#e3e3e3"></div>
<div class="ab" style="left:454px;top:430px;width:1px;height:17px;background:#e3e3e3"></div>
<div class="t" id="N18" style="left:311.00px;top:430px;transform:scaleX(0.9739);">LFN Unicode</div>
<div class="t" id="V18" style="left:460.50px;top:430px;transform:scaleX(0.9862);color:#1c0c88">no</div>
<div class="ab" style="left:268px;top:465px;width:354px;height:1px;background:#e3e3e3"></div>
<div class="ab" style="left:454px;top:448px;width:1px;height:17px;background:#e3e3e3"></div>
<svg class="ab" style="left:278px;top:455px" width="7" height="7"><path d="M6 0.8 V6 H0.8 Z" fill="#333" stroke="#666" stroke-width="0.7" stroke-linejoin="round"/></svg>
<div class="t" id="N19" style="left:292.00px;top:448px;transform:scaleX(1.0080);font-weight:bold;">Write enabled</div>
<div class="t" id="V19" style="left:460.50px;top:448px;transform:scaleX(0.9258);color:#1c0c88">Enabled</div>
<div class="ab" style="left:268px;top:483px;width:354px;height:1px;background:#e3e3e3"></div>
<div class="ab" style="left:454px;top:466px;width:1px;height:17px;background:#e3e3e3"></div>
<svg class="ab" style="left:297px;top:473px" width="7" height="7"><path d="M6 0.8 V6 H0.8 Z" fill="#333" stroke="#666" stroke-width="0.7" stroke-linejoin="round"/></svg>
<div class="t" id="N20" style="left:311.00px;top:466px;transform:scaleX(1.0002);font-weight:bold;">Use TimeDate</div>
<div class="t" id="V20" style="left:460.50px;top:466px;transform:scaleX(0.9258);color:#1c0c88">Enabled</div>
<div class="ab" style="left:268px;top:501px;width:354px;height:1px;background:#e3e3e3"></div>
<div class="ab" style="left:454px;top:484px;width:1px;height:17px;background:#e3e3e3"></div>
<div class="t" id="N21" style="left:330.00px;top:484px;transform:scaleX(0.9793);">Realtime clock</div>
<div class="t" id="V21" style="left:460.50px;top:484px;transform:scaleX(0.9333);color:#000">TmDt1</div>
<div class="ab" style="left:268px;top:519px;width:354px;height:1px;background:#e3e3e3"></div>
<div class="ab" style="left:454px;top:502px;width:1px;height:17px;background:#e3e3e3"></div>
<svg class="ab" style="left:278px;top:509px" width="7" height="7"><path d="M6 0.8 V6 H0.8 Z" fill="#333" stroke="#666" stroke-width="0.7" stroke-linejoin="round"/></svg>
<div class="t" id="N22" style="left:292.00px;top:502px;transform:scaleX(1.0145);font-weight:bold;">Reentrant</div>
<div class="t" id="V22" style="left:460.50px;top:502px;transform:scaleX(0.9258);color:#1c0c88">Enabled</div>
<div class="ab" style="left:268px;top:537px;width:354px;height:1px;background:#e3e3e3"></div>
<div class="ab" style="left:454px;top:520px;width:1px;height:17px;background:#e3e3e3"></div>
<div class="t" id="N23" style="left:311.00px;top:520px;transform:scaleX(1.0202);">Timeout ticks</div>
<div class="t" id="V23" style="left:460.50px;top:520px;transform:scaleX(0.8395);color:#1c0c88">1000</div>
<div class="ab" style="left:606px;top:520px;width:14px;height:14px;background:#a2a2a2;border-top:1px solid #c8c8c8;border-left:1px solid #c8c8c8;border-right:1px solid #2c2c2c;border-bottom:1px solid #2c2c2c;font-weight:bold;font-size:12.5px;line-height:16px;text-align:center;-webkit-text-stroke:0.3px #000">D</div>
<div class="ab" style="left:268px;top:555px;width:354px;height:1px;background:#e3e3e3"></div>
<div class="ab" style="left:454px;top:538px;width:1px;height:17px;background:#e3e3e3"></div>
<div class="t" id="N24" style="left:311.00px;top:538px;transform:scaleX(0.9896);">Handle</div>
<div class="t" id="V24" style="left:460.50px;top:538px;transform:scaleX(0.9125);color:#1c0c88">HANDLE</div>
<div class="ab" style="left:268px;top:573px;width:354px;height:1px;background:#e3e3e3"></div>
<div class="ab" style="left:454px;top:556px;width:1px;height:17px;background:#e3e3e3"></div>
<div class="t" id="N25" style="left:311.00px;top:556px;transform:scaleX(0.9529);">User Sync Functions</div>
<div class="t" id="V25" style="left:460.50px;top:556px;transform:scaleX(0.9862);color:#1c0c88">no</div>
<div class="ab" style="left:268px;top:591px;width:354px;height:1px;background:#e3e3e3"></div>
<div class="ab" style="left:454px;top:574px;width:1px;height:17px;background:#e3e3e3"></div>
<svg class="ab" style="left:297px;top:581px" width="7" height="7"><path d="M6 0.8 V6 H0.8 Z" fill="#333" stroke="#666" stroke-width="0.7" stroke-linejoin="round"/></svg>
<div class="t" id="N26" style="left:311.00px;top:574px;transform:scaleX(0.9274);font-weight:bold;">RTOS</div>
<div class="t" id="V26" style="left:460.50px;top:574px;transform:scaleX(0.9258);color:#1c0c88">Enabled</div>
<div class="ab" style="left:268px;top:609px;width:354px;height:1px;background:#e3e3e3"></div>
<div class="ab" style="left:454px;top:592px;width:1px;height:17px;background:#e3e3e3"></div>
<div class="t" id="N27" style="left:330.00px;top:592px;transform:scaleX(0.8874);">RTOS</div>
<div class="t" id="V27" style="left:460.50px;top:592px;transform:scaleX(0.8269);color:#1c0c88">FRTOS1</div>
<div class="ab" style="left:268px;top:627px;width:354px;height:1px;background:#e3e3e3"></div>
<div class="ab" style="left:454px;top:610px;width:1px;height:17px;background:#e3e3e3"></div>
<div class="t" id="N28" style="left:330.00px;top:610px;transform:scaleX(0.9694);">Use dynamic heap</div>
<div class="t" id="V28" style="left:460.50px;top:610px;transform:scaleX(0.8471);color:#1c0c88">yes</div>
<div class="ab" style="left:268px;top:645px;width:354px;height:1px;background:#e3e3e3"></div>
<div class="ab" style="left:454px;top:628px;width:1px;height:17px;background:#e3e3e3"></div>
<div class="t" id="N29" style="left:292.00px;top:628px;transform:scaleX(1.0206);">Utility</div>
<div class="t" id="V29" style="left:460.50px;top:628px;transform:scaleX(0.8391);color:#1c0c88">UTIL1</div>
<div class="ab" style="left:268px;top:663px;width:354px;height:1px;background:#e3e3e3"></div>
<div class="ab" style="left:454px;top:646px;width:1px;height:17px;background:#e3e3e3"></div>
<svg class="ab" style="left:278px;top:653px" width="7" height="7"><path d="M6 0.8 V6 H0.8 Z" fill="#333" stroke="#666" stroke-width="0.7" stroke-linejoin="round"/></svg>
<div class="t" id="N30" style="left:292.00px;top:646px;transform:scaleX(0.9579);font-weight:bold;">Shell</div>
<div class="t" id="V30" style="left:460.50px;top:646px;transform:scaleX(0.9258);color:#1c0c88">Enabled</div>
<div class="ab" style="left:268px;top:681px;width:354px;height:1px;background:#e3e3e3"></div>
<div class="ab" style="left:454px;top:664px;width:1px;height:17px;background:#e3e3e3"></div>
<div class="t" id="N31" style="left:311.00px;top:664px;transform:scaleX(0.9452);">Shell</div>
<div class="t" id="V31" style="left:460.50px;top:664px;transform:scaleX(0.8006);color:#1c0c88">CLS1</div>
<div class="ab" style="left:268px;top:699px;width:354px;height:1px;background:#e3e3e3"></div>
<div class="ab" style="left:454px;top:682px;width:1px;height:17px;background:#e3e3e3"></div>
<div class="t" id="N32" style="left:311.00px;top:682px;transform:scaleX(0.9825);">File print buffer size</div>
<div class="t" id="V32" style="left:460.50px;top:682px;transform:scaleX(0.8000);color:#1c0c88">32</div>
<div class="ab" style="left:606px;top:682px;width:14px;height:14px;background:#a2a2a2;border-top:1px solid #c8c8c8;border-left:1px solid #c8c8c8;border-right:1px solid #2c2c2c;border-bottom:1px solid #2c2c2c;font-weight:bold;font-size:12.5px;line-height:16px;text-align:center;-webkit-text-stroke:0.3px #000">D</div>
<div class="ab" style="left:268px;top:717px;width:354px;height:1px;background:#e3e3e3"></div>
<div class="ab" style="left:454px;top:700px;width:1px;height:17px;background:#e3e3e3"></div>
<div class="t" id="N33" style="left:311.00px;top:700px;transform:scaleX(0.9716);">File copy buffer size</div>
<div class="t" id="V33" style="left:460.50px;top:700px;transform:scaleX(0.8000);color:#1c0c88">32</div>
<div class="ab" style="left:606px;top:700px;width:14px;height:14px;background:#a2a2a2;border-top:1px solid #c8c8c8;border-left:1px solid #c8c8c8;border-right:1px solid #2c2c2c;border-bottom:1px solid #2c2c2c;font-weight:bold;font-size:12.5px;line-height:16px;text-align:center;-webkit-text-stroke:0.3px #000">D</div>
<div class="ab" style="left:454px;top:718px;width:1px;height:9px;background:#e3e3e3"></div>
<svg class="ab" style="left:5px;top:7px" width="18" height="14"><rect x="1.5" y="1.5" width="6" height="4" fill="#f4d58a" stroke="#b8843a"/><path d="M1.5 1.5 h3 l1 -1 h1" stroke="#b8843a" fill="none"/><path d="M9 4.5 H14" stroke="#2a6fc0" stroke-width="1.2"/><path d="M3.5 6 V9.5 H6" stroke="#2a6fc0" stroke-width="1.2" fill="none"/><rect x="6.5" y="7.5" width="6" height="4" fill="#f4d58a" stroke="#b8843a"/><path d="M14 10.5 H16" stroke="#2a6fc0" stroke-width="1.2"/></svg>
<svg class="ab" style="left:168px;top:9px" width="10" height="10"><path d="M0.5 0.5 H2.5 L4.5 2.5 H5.5 L7.5 0.5 H9.5 V2.5 L7.5 4.5 V5.5 L9.5 7.5 V9.5 H7.5 L5.5 7.5 H4.5 L2.5 9.5 H0.5 V7.5 L2.5 5.5 V4.5 L0.5 2.5 Z" fill="#fff" stroke="#4a4a4a" stroke-width="1"/></svg>
<svg class="ab" style="left:448px;top:11px" width="10" height="10"><path d="M0.5 0.5 H2.5 L4.5 2.5 H5.5 L7.5 0.5 H9.5 V2.5 L7.5 4.5 V5.5 L9.5 7.5 V9.5 H7.5 L5.5 7.5 H4.5 L2.5 9.5 H0.5 V7.5 L2.5 5.5 V4.5 L0.5 2.5 Z" fill="#fff" stroke="#4a4a4a" stroke-width="1"/></svg>
<svg class="ab" style="left:199px;top:8px" width="11" height="5"><rect x="0.5" y="0.5" width="9" height="3" fill="#fff" stroke="#555" stroke-width="1.2"/></svg><svg class="ab" style="left:222px;top:8px" width="11" height="11"><rect x="0.6" y="0.6" width="9" height="9" fill="#fff" stroke="#555" stroke-width="1.2"/><path d="M0.6 2.6 H9.6" stroke="#555" stroke-width="1.2"/></svg>
<svg class="ab" style="left:591px;top:8px" width="11" height="5"><rect x="0.5" y="0.5" width="9" height="3" fill="#fff" stroke="#555" stroke-width="1.2"/></svg><svg class="ab" style="left:614px;top:8px" width="11" height="11"><rect x="0.6" y="0.6" width="9" height="9" fill="#fff" stroke="#555" stroke-width="1.2"/><path d="M0.6 2.6 H9.6" stroke="#555" stroke-width="1.2"/></svg>
<svg class="ab" style="left:225px;top:32px" width="11" height="7"><path d="M0.5 0.8 H10.5 L5.5 5.5 Z" fill="#fff" stroke="#555" stroke-width="1.1"/></svg>
<svg class="ab" style="left:617px;top:35px" width="11" height="7"><path d="M0.5 0.8 H10.5 L5.5 5.5 Z" fill="#fff" stroke="#555" stroke-width="1.1"/></svg>
<svg class="ab" style="left:148px;top:32px" width="15" height="15"><rect x="1.5" y="1.5" width="9" height="9" fill="#e8eef6" stroke="#b0bccb"/><rect x="3.5" y="3.5" width="10" height="10" fill="#f4f8fc" stroke="#9aa8ba"/><path d="M5 8.5 H12" stroke="#1c4f98" stroke-width="1.6"/></svg>
<svg class="ab" style="left:170px;top:32px" width="17" height="14"><path d="M3.5 3.5 L5 1.5 H10 L11.5 3.5" fill="#f4d0a0" stroke="#d8a070"/><rect x="1.5" y="3.5" width="13.5" height="9" rx="1.5" fill="#9cc4f8" stroke="#3a5ad0"/><path d="M2 4.5 H15" stroke="#c8e0ff"/></svg>
<svg class="ab" style="left:193px;top:32px" width="15" height="15"><path d="M5 4 H14 V14.5 H5 Z" fill="#111"/><path d="M2.5 1.5 H8.5 L11.5 4.5 V12.5 H2.5 Z" fill="#fff" stroke="#111"/><path d="M8.5 1.5 V4.5 H11.5" fill="none" stroke="#111"/><path d="M5.5 5.5 H10 M6 7.5 H10 M6 9.5 H10" stroke="#2840e0" stroke-width="1"/><path d="M0 7.5 H5" stroke="#a01818" stroke-width="2"/><path d="M4 5 L7 7.5 L4 10 Z" fill="#a01818"/></svg>
<svg class="ab" style="left:263px;top:7px" width="18" height="18"><g transform="rotate(-45 9 9)"><path d="M3.6 3 V15 M14.4 3 V15" stroke="#e8e000" stroke-width="2" stroke-dasharray="1.6 1.2"/><rect x="5.3" y="2.2" width="7.4" height="13.6" fill="#fff" stroke="#0a0a0a" stroke-width="1.8"/><path d="M7.6 4.5 V13.5" stroke="#222" stroke-width="1.3"/><circle cx="7.6" cy="4.2" r="1" fill="#333"/></g></svg>
<svg class="ab" style="left:586px;top:34px" width="17" height="18"><defs><linearGradient id="ng" x1="0" y1="0" x2="0" y2="1"><stop offset="0" stop-color="#fbeea8"/><stop offset="1" stop-color="#f4df80"/></linearGradient></defs><rect x="0.5" y="1" width="13" height="15.5" fill="url(#ng)"/><path d="M1 16.5 H13.5 V2" stroke="#c2b070" fill="none"/><path d="M0.5 1.5 V16" stroke="#e8d890"/><path d="M11.5 1.6 L12.7 4.1 L15.2 5.3 L12.7 6.5 L11.5 9 L10.3 6.5 L7.8 5.3 L10.3 4.1 Z" fill="#fff6c8" stroke="#a8841c" stroke-width="1.1" stroke-linejoin="round"/><path d="M6.5 3.5 L8 2" stroke="#e04a3a" stroke-width="1.4"/></svg>
<div class="ab" style="left:7px;top:731px;width:233px;height:16px;background:linear-gradient(#e6e6e6,#eeeeee 40%,#f0f0f0)"></div><svg class="ab" style="left:12px;top:735px" width="6" height="8"><path d="M5 0.5 V7.5 L1 4 Z" fill="#333"/></svg><svg class="ab" style="left:229px;top:735px" width="6" height="8"><path d="M1 0.5 V7.5 L5 4 Z" fill="#333"/></svg><div class="ab" style="left:25px;top:731px;width:175px;height:14px;border:1px solid #8c8c8c;border-radius:2px;background:linear-gradient(#f4f4f4,#ececec 45%,#dadada 50%,#d4d4d4 90%,#e0e0e0)"></div><svg class="ab" style="left:109px;top:735px" width="9" height="8"><path d="M1.5 0 V7 M4.5 0 V7 M7.5 0 V7" stroke="#333" stroke-width="1.2"/></svg>
<div class="ab" style="left:268px;top:727px;width:355px;height:16px;background:linear-gradient(#e6e6e6,#eeeeee 40%,#f0f0f0)"></div><svg class="ab" style="left:273px;top:731px" width="6" height="8"><path d="M5 0.5 V7.5 L1 4 Z" fill="#333"/></svg><svg class="ab" style="left:612px;top:731px" width="6" height="8"><path d="M1 0.5 V7.5 L5 4 Z" fill="#333"/></svg><div class="ab" style="left:286px;top:727px;width:199px;height:14px;border:1px solid #8c8c8c;border-radius:2px;background:linear-gradient(#f4f4f4,#ececec 45%,#dadada 50%,#d4d4d4 90%,#e0e0e0)"></div><svg class="ab" style="left:382px;top:731px" width="9" height="8"><path d="M1.5 0 V7 M4.5 0 V7 M7.5 0 V7" stroke="#333" stroke-width="1.2"/></svg>
<div class="ab" style="left:304px;top:193px;width:183px;height:23px;background:#fcf44c;mix-blend-mode:multiply"></div>
<div class="ab" style="left:326px;top:478px;width:174px;height:24px;background:#fcf44c;mix-blend-mode:multiply"></div>
</body></html>
